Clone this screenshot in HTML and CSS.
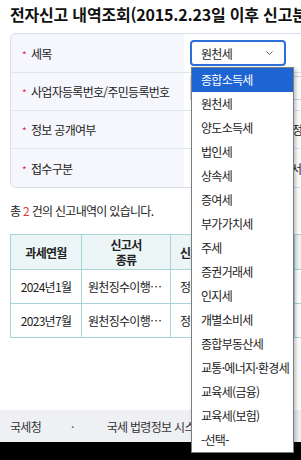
FILE: index.html
```html
<!DOCTYPE html>
<html lang="ko">
<head>
    <meta charset="utf-8">
    <title>전자신고 내역조회</title>
    <link rel="stylesheet" href="styles.css">
</head>
<body>
    <div class="page">
        <h1 class="page-title">전자신고 내역조회(2015.2.23일 이후 신고분)</h1>

        <div class="search-box">
            <div class="search-row row-tall">
                <div class="search-label"><span class="req">*</span>세목</div>
                <div class="search-value">
                    <div class="select-wrap">
                        <div class="select-box">
                            <span>원천세</span>
                            <svg class="select-arrow" width="7" height="4" viewBox="0 0 7 4">
                                <polyline points="0.5,0.5 3.5,3.5 6.5,0.5" fill="none" stroke="#666" stroke-width="1"/>
                            </svg>
                        </div>
                        <ul class="select-list">
                            <li class="selected">종합소득세</li>
                            <li>원천세</li>
                            <li>양도소득세</li>
                            <li>법인세</li>
                            <li>상속세</li>
                            <li>증여세</li>
                            <li>부가가치세</li>
                            <li>주세</li>
                            <li>증권거래세</li>
                            <li>인지세</li>
                            <li>개별소비세</li>
                            <li>종합부동산세</li>
                            <li>교통·에너지·환경세</li>
                            <li>교육세(금융)</li>
                            <li>교육세(보험)</li>
                            <li>-선택-</li>
                        </ul>
                    </div>
                </div>
            </div>
            <div class="search-row">
                <div class="search-label"><span class="req">*</span>사업자등록번호/주민등록번호</div>
                <div class="search-value">
                    <span class="input-box"></span>
                </div>
            </div>
            <div class="search-row">
                <div class="search-label"><span class="req">*</span>정보 공개여부</div>
                <div class="search-value">
                    <span class="value-text">정보공개 동의</span>
                </div>
            </div>
            <div class="search-row row-tall">
                <div class="search-label"><span class="req">*</span>접수구분</div>
                <div class="search-value">
                    <span class="value-text value-text-wide">서면신고</span>
                </div>
            </div>
        </div>

        <p class="result-count">총 <span class="count-num">2</span> 건의 신고내역이 있습니다.</p>

        <table class="result-table">
            <colgroup>
                <col style="width: 71px">
                <col style="width: 89px">
                <col style="width: 124px">
                <col style="width: 100px">
            </colgroup>
            <thead>
                <tr>
                    <th>과세연월</th>
                    <th>신고서<br>종류</th>
                    <th class="left">신고구분</th>
                    <th>접수일</th>
                </tr>
            </thead>
            <tbody>
                <tr>
                    <td>2024년1월</td>
                    <td class="cut">원천징수이행…</td>
                    <td class="left">정기신고</td>
                    <td>-</td>
                </tr>
                <tr>
                    <td>2023년7월</td>
                    <td class="cut">원천징수이행…</td>
                    <td class="left">정기신고</td>
                    <td>-</td>
                </tr>
            </tbody>
        </table>

        <div class="footer">
            <span class="footer-item">국세청</span>
            <span class="footer-dot">·</span>
            <span class="footer-item">국세 법령정보 시스템</span>
            <span class="footer-item footer-last">후</span>
        </div>
        <div class="footer-bottom"></div>
    </div>
</body>
</html>
```

FILE: styles.css
```css
html, body {
    margin: 0;
    padding: 0;
    overflow: hidden;
}

body {
    font-family: 'Noto Sans CJK KR', 'Noto Sans', sans-serif;
    font-size: 12px;
    letter-spacing: -0.7px;
    color: #222222;
    background-color: #ffffff;
}

.page {
    width: 301px;
}

.page-title {
    margin: 0;
    padding: 3px 10px 0;
    height: 22px;
    line-height: 22px;
    font-size: 16px;
    letter-spacing: -0.2px;
    font-weight: bold;
    color: #111111;
    white-space: nowrap;
}

.search-box {
    margin: 8px 0 0 10px;
    width: 360px;
    background-color: #f5f7fc;
    border: 1px solid #d6deee;
    border-radius: 6px;
}

.search-row {
    display: grid;
    grid-template-columns: 173px 1fr;
    height: 37px;
    border-top: 1px solid #dfe5f1;
}

.search-row:first-child {
    border-top: none;
}

.search-row.row-tall {
    height: 38px;
}

.search-label {
    display: flex;
    align-items: center;
    padding-left: 11px;
    white-space: nowrap;
    color: #222222;
}

.req {
    color: #e0245e;
    font-size: 10px;
    margin-right: 5px;
    position: relative;
    top: 1px;
}

.search-value {
    display: flex;
    align-items: center;
    background-color: #ffffff;
    padding-left: 6px;
}

.select-wrap {
    position: relative;
}

.select-box {
    box-sizing: border-box;
    width: 96px;
    height: 26px;
    border: 2px solid #2c6fd8;
    border-radius: 4px;
    display: flex;
    align-items: center;
    justify-content: space-between;
    padding: 0 11px 0 9px;
    background-color: #ffffff;
    color: #222222;
}

.select-arrow {
    display: block;
}

.select-list {
    position: absolute;
    left: 1px;
    top: 27px;
    width: 101px;
    margin: 0;
    padding: 0;
    list-style: none;
    background-color: #ffffff;
    border: 1px solid #7d7d7d;
    box-shadow: 2px 2px 4px rgba(0, 0, 0, 0.25);
    z-index: 5;
}

.select-list li {
    height: 24px;
    line-height: 24px;
    padding-left: 9px;
    white-space: nowrap;
    color: #222222;
}

.select-list li.selected {
    background-color: #1e64d3;
    color: #ffffff;
}

.input-box {
    display: block;
    width: 150px;
    height: 22px;
    border: 1px solid #cfd6e2;
    background-color: #ffffff;
    margin-top: -7px;
}

.value-text {
    padding-left: 102px;
    white-space: nowrap;
}

.value-text-wide {
    padding-left: 101px;
}

.result-count {
    margin: 13px 0 0 10px;
    height: 20px;
    line-height: 20px;
    white-space: nowrap;
}

.count-num {
    color: #e53935;
}

.result-table {
    margin: 13px 0 0 10px;
    width: 384px;
    table-layout: fixed;
    border-collapse: collapse;
}

.result-table th,
.result-table td {
    border: 1px solid #a9d5da;
    text-align: center;
    white-space: nowrap;
    overflow: hidden;
    padding: 0 4px;
}

.result-table th {
    height: 34px;
    background-color: #ecf6f7;
    font-weight: bold;
    line-height: 15px;
    color: #222222;
}

.result-table td {
    height: 33px;
    color: #222222;
}

.result-table td.cut {
    text-align: left;
    padding-left: 6px;
}

.result-table .left {
    text-align: left;
    padding-left: 9px;
}

.footer {
    margin-top: 72px;
    height: 32px;
    background-color: #eff0f4;
    display: flex;
    align-items: center;
    padding-left: 10px;
    white-space: nowrap;
    color: #333333;
}

.footer-dot {
    margin: 0 33px 0 30px;
    color: #555555;
}

.footer-last {
    margin-left: 70px;
}

.footer-bottom {
    height: 20px;
    background-color: #000000;
}
```
